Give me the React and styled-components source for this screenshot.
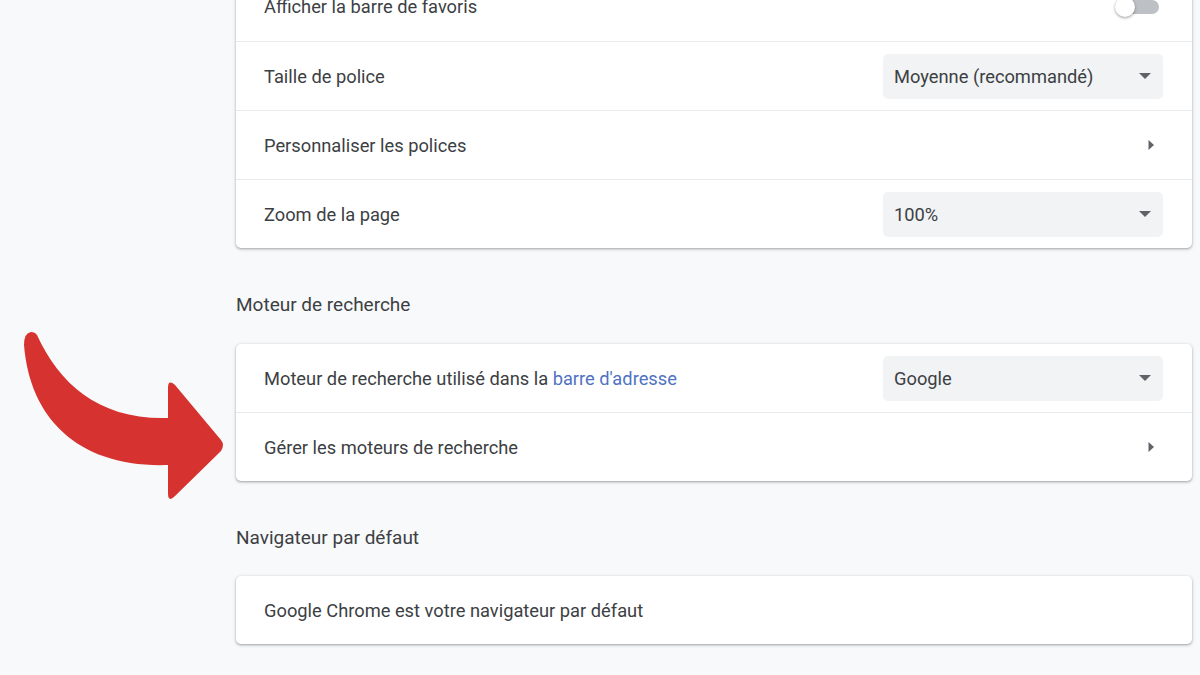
import React from 'react';
import styled, { createGlobalStyle } from 'styled-components';

const Global = createGlobalStyle`
  html, body {
    margin: 0;
    padding: 0;
    background: #f8f9fa;
    font-family: Roboto, "Liberation Sans", sans-serif;
    color: #202124;
    overflow: hidden;
  }
`

const Page = styled.div`
  position: relative;
  width: 1200px;
  height: 675px;
  overflow: hidden;
  background: #f8f9fa;
`

const Column = styled.main`
  width: 956px;
  margin-left: 236px;
  margin-top: -28px;
`

const Card = styled.section`
  background: #fff;
  border-radius: 5px;
  box-shadow: 0 1px 2px rgba(60, 64, 67, 0.3), 0 1px 3px 1px rgba(60, 64, 67, 0.15);
`

const Row = styled.div`
  height: ${p => p.h || 69}px;
  box-sizing: border-box;
  display: flex;
  align-items: center;
  justify-content: space-between;
  padding: 0 29px 0 28px;
  border-top: ${p => (p.first ? 'none' : '1px solid #e8eaed')};
`

const Label = styled.span`
  font-size: 18.3px;
  color: #3c4043;
`

const Link = styled.span`
  color: #4f73c2;
`

const Heading = styled.h2`
  margin: ${p => (p.tight ? '45px 0 26px' : '45px 0 27px')};
  font-size: 19px;
  line-height: 24px;
  font-weight: 400;
  color: #3c4043;
`

const Select = styled.div`
  width: 280px;
  height: 45px;
  box-sizing: border-box;
  display: flex;
  align-items: center;
  justify-content: space-between;
  padding: 0 11px;
  border-radius: 5px;
  background: #f1f3f4;
  font-size: 18.3px;
  color: #3c4043;
`

const Toggle = styled.div`
  position: relative;
  width: 44px;
  height: 20px;
  margin-right: 4px;
`

const Track = styled.div`
  position: absolute;
  left: 4px;
  right: 0;
  top: 3px;
  height: 14px;
  border-radius: 7px;
  background: #bdc1c6;
`

const Knob = styled.div`
  position: absolute;
  left: 0;
  top: 0;
  width: 20px;
  height: 20px;
  border-radius: 50%;
  background: #fff;
  box-shadow: 0 1px 3px rgba(0, 0, 0, 0.4);
`

const Arrow = styled.svg`
  position: absolute;
  left: 0;
  top: 0;
  pointer-events: none;
`

const Caret = () => (
  <svg width="14" height="8" viewBox="0 0 14 8">
    <path d="M1 1h12L7 7z" fill="#5f6368" />
  </svg>
)

const Chevron = () => (
  <svg width="8" height="12" viewBox="0 0 8 12" style={{ marginRight: 8 }}>
    <path d="M1.5 1v10L7 6z" fill="#5f6368" />
  </svg>
)

export default function App() {
  return (
    <Page>
      <Global />
      <Column>
        <Card>
          <Row first>
            <Label>Afficher la barre de favoris</Label>
            <Toggle><Track /><Knob /></Toggle>
          </Row>
          <Row>
            <Label>Taille de police</Label>
            <Select>Moyenne (recommandé)<Caret /></Select>
          </Row>
          <Row>
            <Label>Personnaliser les polices</Label>
            <Chevron />
          </Row>
          <Row>
            <Label>Zoom de la page</Label>
            <Select>100%<Caret /></Select>
          </Row>
        </Card>

        <Heading>Moteur de recherche</Heading>
        <Card>
          <Row first h={68}>
            <Label>Moteur de recherche utilisé dans la <Link>barre d'adresse</Link></Label>
            <Select>Google<Caret /></Select>
          </Row>
          <Row>
            <Label>Gérer les moteurs de recherche</Label>
            <Chevron />
          </Row>
        </Card>

        <Heading tight>Navigateur par défaut</Heading>
        <Card>
          <Row first h={68}>
            <Label>Google Chrome est votre navigateur par défaut</Label>
          </Row>
        </Card>
      </Column>

      <Arrow width="1200" height="675" viewBox="0 0 1200 675">
        <path
          d="M37 335 C60 385 100 420 168 418 L168 388 Q168 379 175 385 L221 440 Q225 445 221 451 L175 496 Q168 503 168 493 L168 465 C80 468 30 420 24 345 Q24 333 31 332 Q35 332 37 335 Z"
          fill="#d63330"
        />
      </Arrow>
    </Page>
  );
}
